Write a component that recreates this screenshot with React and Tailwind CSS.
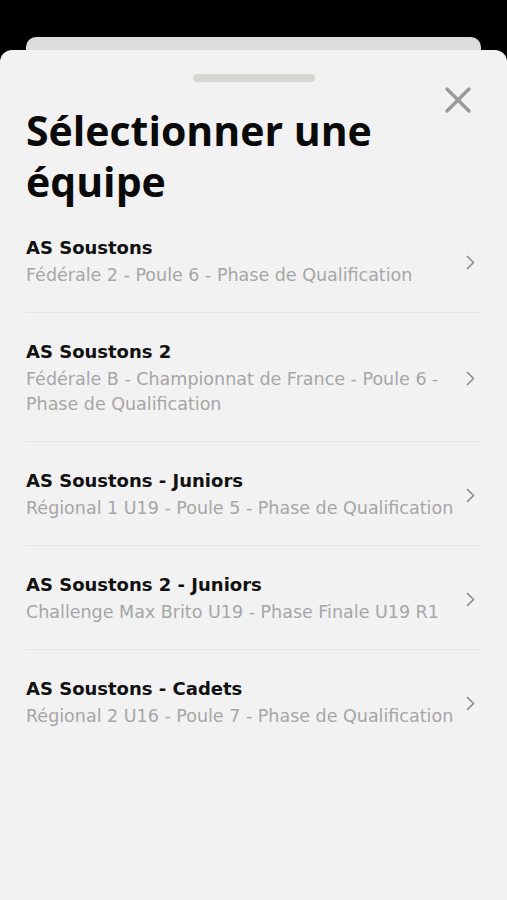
import React from 'react';

const teams = [
    { name: 'AS Soustons', league: 'Fédérale 2 - Poule 6 - Phase de Qualification' },
    { name: 'AS Soustons 2', league: 'Fédérale B - Championnat de France - Poule 6 - Phase de Qualification' },
    { name: 'AS Soustons - Juniors', league: 'Régional 1 U19 - Poule 5 - Phase de Qualification' },
    { name: 'AS Soustons 2 - Juniors', league: 'Challenge Max Brito U19 - Phase Finale U19 R1' },
    { name: 'AS Soustons - Cadets', league: 'Régional 2 U16 - Poule 7 - Phase de Qualification' },
];

const Chevron = () => (
    <svg width="9" height="15" viewBox="0 0 9 15" fill="none" className="shrink-0 mr-[6px]">
        <path d="M1.5 1.5l6 6-6 6" stroke="#8e8e8e" strokeWidth="1.7" strokeLinecap="round" strokeLinejoin="round" />
    </svg>
);

const App = () => {
    return (
        <div className="min-h-screen bg-black flex flex-col pt-[37px]">
            {/* card behind the sheet */}
            <div className="mx-[26px] h-[13px] rounded-t-[10px] bg-[#dcdcdc]"></div>

            {/* Sheet */}
            <div className="relative flex-1 bg-[#f2f2f2] rounded-t-[12px] min-h-[850px]">
                <div className="mx-auto mt-[24px] w-[122px] h-[8px] rounded-full bg-[#d6d6d3]"></div>

                <button className="absolute top-[37px] right-[36px] w-[26px] h-[26px]">
                    <svg width="26" height="26" viewBox="0 0 26 26" fill="none">
                        <path d="M2 2l22 22M24 2L2 24" stroke="#999999" strokeWidth="3.2" strokeLinecap="round" />
                    </svg>
                </button>

                <h1 className="pl-[26px] pt-[23px] pr-[100px] font-['Open_Sans',sans-serif] text-[41px] leading-[51px] font-bold text-[#0a0a0a]">
                    Sélectionner une équipe
                </h1>

                <ul className="mt-[2px] mx-[26px] font-['DejaVu_Sans',sans-serif]">
                    {teams.map((team, i) => (
                        <li
                            key={team.name}
                            className={`flex items-center gap-[12px] pt-[27px] pb-[24px] ${i < teams.length - 1 ? 'border-b border-[#e6e6e6]' : ''}`}
                        >
                            <div className="flex-1 min-w-0">
                                <div className="text-[18px] leading-[24px] font-bold text-[#111]">{team.name}</div>
                                <div className="mt-[3px] text-[17.5px] leading-[25px] text-[#a6a6a6]">{team.league}</div>
                            </div>
                            <Chevron />
                        </li>
                    ))}
                </ul>
            </div>
        </div>
    );
};

export default App;
